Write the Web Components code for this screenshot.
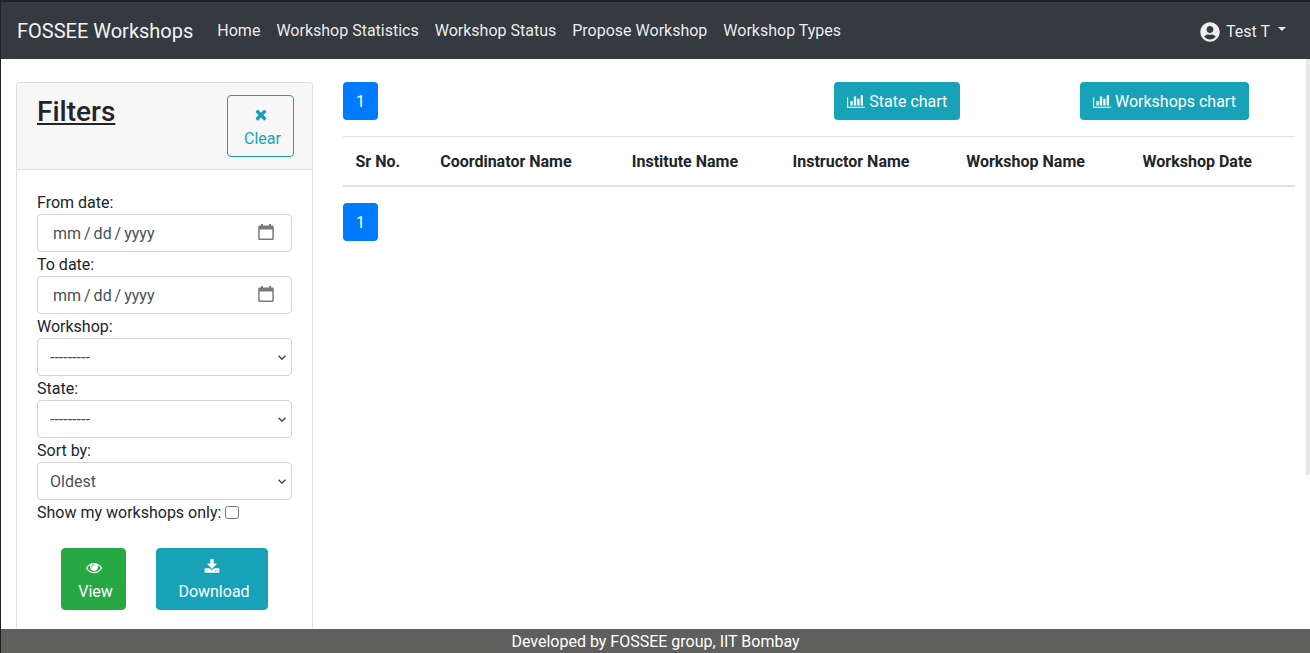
<!DOCTYPE html>
<html><head><meta charset="utf-8">
<style>
html,body{margin:0;padding:0;height:653px;overflow:hidden;background:#fff}
body{font:16px/1.5 Roboto,"Liberation Sans",sans-serif;color:#212529;display:flex;flex-direction:column;box-sizing:border-box;border-left:1px solid #222}
app-main{flex:1;min-height:0}
</style></head><body>
<app-nav></app-nav>
<app-main></app-main>
<app-foot></app-foot>
<script>
const ICON={
cal:'<svg width="16" height="16" viewBox="0 0 16 16"><path fill="#777b80" fill-rule="evenodd" d="M3 0h2v1.500h6V0h2v1.500h1.300c.9 0 1.500.7 1.500 1.500v11.500c0 .9-.6 1.500-1.500 1.500H1.700C.8 16 .2 15.400 .2 14.500V3c0-.8.6-1.500 1.500-1.500H3zM1.700 5.500v8.600c0 .3.200.4.400.4h11.800c.2 0 .4-.1.400-.4V5.500z"/></svg>',
times:'<svg width="16" height="16" viewBox="0 0 1792 1792"><path fill="currentColor" d="M1490 1322q0 40-28 68l-136 136q-28 28-68 28t-68-28l-294-294-294 294q-28 28-68 28t-68-28l-136-136q-28-28-28-68t28-68l294-294-294-294q-28-28-28-68t28-68l136-136q28-28 68-28t68 28l294 294 294-294q28-28 68-28t68 28l136 136q28 28 28 68t-28 68l-294 294 294 294q28 28 28 68z"/></svg>',
eye:'<svg width="16" height="16" viewBox="0 0 1792 1792"><path fill="currentColor" d="M1664 960q-152-236-381-353 61 104 61 225 0 185-131.500 316.500t-316.500 131.500-316.500-131.500-131.500-316.500q0-121 61-225-229 117-381 353 133 205 333.500 326.500t434.500 121.500 434.500-121.500 333.500-326.500zm-720-384q0-20-14-34t-34-14q-125 0-214.500 89.500t-89.500 214.500q0 20 14 34t34 14 34-14 14-34q0-86 61-147t147-61q20 0 34-14t14-34zm848 384q0 34-20 69-140 230-376.500 368.500t-499.500 138.500-499.500-139-376.500-368q-20-35-20-69t20-69q140-229 376.500-368t499.500-139 499.500 139 376.500 368q20 35 20 69z"/></svg>',
dl:'<svg width="16" height="16" viewBox="0 0 1792 1792"><path fill="currentColor" d="M1344 1344q0-26-19-45t-45-19-45 19-19 45 19 45 45 19 45-19 19-45zm256 0q0-26-19-45t-45-19-45 19-19 45 19 45 45 19 45-19 19-45zm128-224v320q0 40-28 68t-68 28h-1472q-40 0-68-28t-28-68v-320q0-40 28-68t68-28h465l135 136q58 56 136 56t136-56l136-136h464q40 0 68 28t28 68zm-325-569q17 41-14 70l-448 448q-18 19-45 19t-45-19l-448-448q-31-29-14-70 17-39 59-39h256v-448q0-26 19-45t45-19h256q26 0 45 19t19 45v448h256q42 0 59 39z"/></svg>',
chart:'<svg width="18.290" height="16" viewBox="0 0 2048 1792"><path fill="currentColor" d="M640 896v512h-256v-512h256zm384-512v1024h-256v-1024h256zm1024 1152v128h-2048v-1152h128v1024h1920zm-640-896v768h-256v-768h256zm384-384v1152h-256v-1152h256z"/></svg>',
user:'<svg width="20" height="20" viewBox="0 0 496 512"><path fill="currentColor" d="M248 8C111 8 0 119 0 256s111 248 248 248 248-111 248-248S385 8 248 8zm0 96c48.600 0 88 39.400 88 88s-39.400 88-88 88-88-39.400-88-88 39.400-88 88-88zm0 344c-58.700 0-111.300-26.600-146.500-68.200 18.800-35.400 55.600-59.800 98.500-59.800 2.400 0 4.800.4 7.100 1.100 13 4.200 26.600 6.900 40.900 6.900 14.300 0 28-2.700 40.900-6.900 2.300-.7 4.700-1.100 7.100-1.100 42.900 0 79.700 24.400 98.500 59.800C359.300 421.400 306.700 448 248 448z"/></svg>'
};
function def(name,html){customElements.define(name,class extends HTMLElement{constructor(){super();this.attachShadow({mode:'open'}).innerHTML=typeof html==='function'?html(this):html}})}

def('nav-link',`<style>:host{display:block;padding:0 8px;color:rgba(255,255,255,.92);white-space:nowrap}</style><slot></slot>`);
def('app-nav',`<style>
:host{display:flex;align-items:center;height:57px;flex:none;background:#343a40;border-top:2px solid #222;padding:0 16px;color:#fff}
.brand{font-size:20px;line-height:30px;margin-right:16px;white-space:nowrap;color:#f4f4f4}
.links{display:flex;flex:1}
.user{display:flex;align-items:center;color:rgba(255,255,255,.92);margin-right:8px}
.user svg{margin:2px 6.500px 0 -.5px;display:block}
.user span{padding-top:2px}
.caret{width:0;height:0;border:4.800px solid transparent;border-top-color:currentColor;border-bottom:0;margin-left:8px;margin-top:-3px}
</style><div class="brand">FOSSEE Workshops</div>
<div class="links"><nav-link>Home</nav-link><nav-link>Workshop Statistics</nav-link><nav-link>Workshop Status</nav-link><nav-link>Propose Workshop</nav-link><nav-link>Workshop Types</nav-link></div>
<div class="user">${ICON.user}<span>Test T</span><i class="caret"></i></div>`);

def('app-foot',`<style>:host{display:block;flex:none;height:24px;background:#5f5f5d;color:#fff;text-align:center;line-height:25px;font-size:16px}</style>Developed by FOSSEE group, IIT Bombay`);

def('date-field',e=>`<style>
:host{display:flex;align-items:center;justify-content:space-between;box-sizing:border-box;height:38px;width:255px;border:1px solid #ced4da;border-radius:4px;background:#fff;padding:0 17px 0 15px;color:#495057}
span{word-spacing:-1px;padding-top:2px}
svg{display:block;margin-top:-2px}
</style><span>mm / dd / yyyy</span>${ICON.cal}`);

def('select-field',e=>`<style>
:host{display:flex;align-items:center;justify-content:space-between;box-sizing:border-box;height:38px;width:255px;border:1px solid #ced4da;border-radius:4px;background:#fff;padding:0 5px 0 12px;color:#495057}
span{padding-top:2px}
svg{display:block}
</style><span><slot></slot></span><svg width="8" height="5" viewBox="0 0 8 5"><path d="M.6.8L4 4.200 7.400.8" fill="none" stroke="#444" stroke-width="1.400"/></svg>`);

def('icon-btn',e=>`<style>
:host{display:flex;flex-direction:column;align-items:center;box-sizing:border-box;height:62px;border-radius:4px;border:1px solid var(--bc);background:var(--bg);color:var(--fg);padding:9px 12px 0;line-height:24px}
svg{display:block;height:16px;transform:translateY(var(--dy,0))}
.i{height:20px;display:flex;align-items:center;margin-bottom:2px}
.t{margin-left:4px}
</style><div class="i">${ICON[e.getAttribute('icon')]}</div><span class="t"><slot></slot></span>`);

def('page-btn',`<style>:host{display:flex;align-items:center;justify-content:center;width:35px;height:38px;box-sizing:border-box;padding-top:2px;background:#007bff;color:#fff;border-radius:4px}</style><slot></slot>`);

def('chart-btn',e=>`<style>:host{display:flex;align-items:center;gap:3.970px;box-sizing:border-box;height:38px;padding:0 13px;background:#17a2b8;color:#fff;border-radius:4px;white-space:nowrap}svg{display:block}span{padding-top:2px}</style>${ICON.chart}<span><slot></slot></span>`);

def('filter-card',`<style>
:host{display:block;width:297px;box-sizing:border-box;height:547px;border:1px solid #dfdfdf;border-bottom:0;border-radius:4px 4px 0 0;overflow:hidden}
.head{display:flex;justify-content:space-between;height:87px;box-sizing:border-box;background:#f7f7f7;border-bottom:1px solid #dfdfdf;padding:12px 18px 0 20px}
h2{margin:0;font-size:28px;line-height:33.600px;font-weight:500;text-decoration:underline;color:#212529}
icon-btn.clear{--bc:#17a2b8;--bg:transparent;--fg:#17a2b8;--dy:-.5px;width:67px;padding:9px 0 0}
.body{padding:20px 20px 0;}
label{display:block;height:24px;padding-top:1px;box-sizing:border-box;line-height:24px}
.chk{display:flex;align-items:center;height:24px}
.chk span.l{padding-top:2px}
.box{width:14px;height:13px;box-sizing:border-box;border:1px solid #767676;border-radius:2.500px;margin:1px 0 0 4px;background:#fff}
.acts{display:flex;gap:30px;margin:24px 0 0 24px}
.view{--bc:#28a745;--bg:#28a745;--fg:#fff;--dy:-.5px;width:65px}
.dl{--bc:#17a2b8;--bg:#17a2b8;--fg:#fff;--dy:-1px;width:112px}
</style>
<div class="head"><h2>Filters</h2><icon-btn class="clear" icon="times">Clear</icon-btn></div>
<div class="body">
<label>From date:</label><date-field></date-field>
<label>To date:</label><date-field></date-field>
<label>Workshop:</label><select-field>---------</select-field>
<label>State:</label><select-field>---------</select-field>
<label>Sort by:</label><select-field>Oldest</select-field>
<div class="chk"><span class="l">Show my workshops only:</span><span class="box"></span></div>
<div class="acts"><icon-btn class="view" icon="eye">View</icon-btn><icon-btn class="dl" icon="dl">Download</icon-btn></div>
</div>`);

def('work-table',`<style>
:host{display:block;border-top:1px solid #dee2e6;border-bottom:2px solid #dee2e6;margin-top:16px}
.r{display:flex;height:48px;box-sizing:border-box;padding-top:2px;align-items:center;font-weight:700;white-space:nowrap}
.r span{display:block}
</style><div class="r"><span style="margin-left:12.500px">Sr No.</span><span style="margin-left:40px">Coordinator Name</span><span style="margin-left:60.200px">Institute Name</span><span style="margin-left:54.500px">Instructor Name</span><span style="margin-left:56.700px">Workshop Name</span><span style="margin-left:57.700px">Workshop Date</span></div>`);

def('app-main',`<style>
:host{display:flex;position:relative;padding:23px 0 0 15px;gap:30px;overflow:hidden}
.c{width:952px;flex:none}
.top{display:flex;align-items:center}
.top chart-btn:nth-child(2){margin-left:456px}
.top chart-btn:nth-child(3){margin-left:119.400px}
page-btn.b{margin-top:16px}
.sb{position:absolute;right:0;top:0;width:4px;height:416px;background:#e8e8e8}
</style>
<filter-card></filter-card>
<div class="c"><div class="top"><page-btn>1</page-btn><chart-btn>State chart</chart-btn><chart-btn>Workshops chart</chart-btn></div>
<work-table></work-table><page-btn class="b">1</page-btn></div>
<div class="sb"></div>`);
</script>
</body></html>
